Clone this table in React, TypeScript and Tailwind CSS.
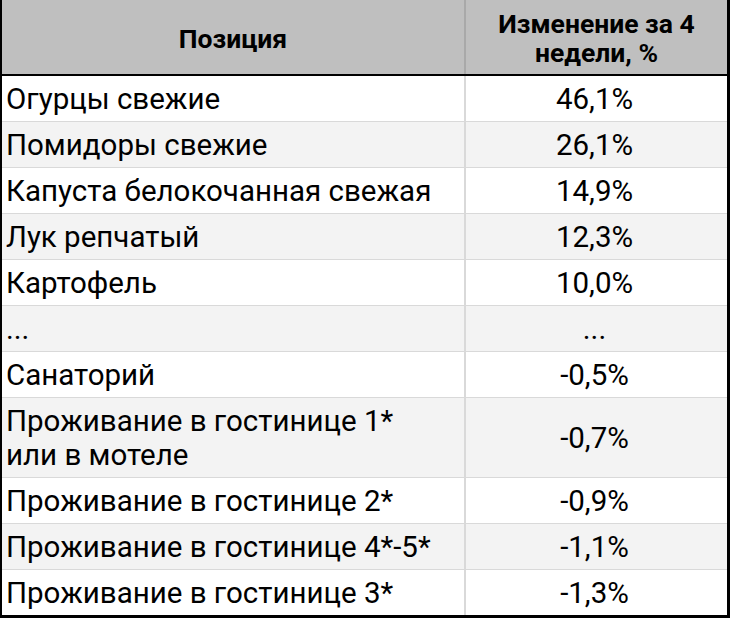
const rows: [string, string][] = [
  ["Огурцы свежие", "46,1%"],
  ["Помидоры свежие", "26,1%"],
  ["Капуста белокочанная свежая", "14,9%"],
  ["Лук репчатый", "12,3%"],
  ["Картофель", "10,0%"],
  ["...", "..."],
  ["Санаторий", "-0,5%"],
  ["Проживание в гостинице 1*\nили в мотеле", "-0,7%"],
  ["Проживание в гостинице 2*", "-0,9%"],
  ["Проживание в гостинице 4*-5*", "-1,1%"],
  ["Проживание в гостинице 3*", "-1,3%"],
];

export default function App() {
  return (
    <div className="w-[730px] h-[618px] bg-white" style={{ fontFamily: "Roboto, 'Liberation Sans', sans-serif" }}>
      <div className="w-[730px] border-l-2 border-r-[3px] border-b-[3px] border-black text-black">
        {/* Header */}
        <div className="flex h-[74px] bg-[#bfbfbf] border-b-2 border-black box-content font-bold text-[26.5px] leading-[29px]">
          <div className="w-[464px] border-r-2 border-[#a9a9a9] flex items-center justify-center pt-[2px]">Позиция</div>
          <div className="flex-1 flex items-center justify-center text-center pt-[2px]">
            Изменение за 4
            <br />
            недели, %
          </div>
        </div>
        {rows.map(([name, value], i) => (
          <div
            key={i}
            className={`flex text-[29.5px] leading-[34px] ${i % 2 === 1 ? "bg-[#f3f3f3]" : "bg-white"} ${
              i < rows.length - 1 ? "border-b-[1.5px] border-[#d9d9d9]" : ""
            }`}
          >
            <div className="w-[464px] border-r-2 border-[#d9d9d9] pl-[4px] py-[5.5px] whitespace-pre-line">{name}</div>
            <div className="flex-1 flex items-center justify-center pr-[4px]">{value}</div>
          </div>
        ))}
      </div>
    </div>
  );
}
